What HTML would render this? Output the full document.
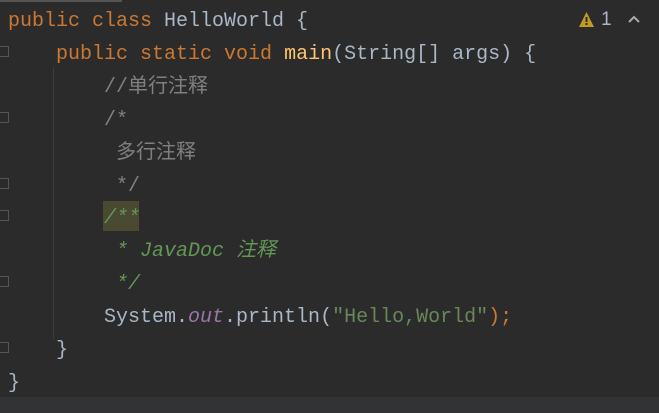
<!DOCTYPE html><html><head><style>
body{margin:0;width:659px;height:413px;background:#2b2b2b;overflow:hidden;position:relative;font-family:"Liberation Mono","Noto Sans CJK SC",monospace;font-size:20px}
.l{position:absolute;left:8px;white-space:pre;color:#a9b7c6;line-height:20px}
.k{color:#cc7832}.f{color:#ffc66d}.c{color:#808080}.d{color:#629755;font-style:italic}.o{color:#9876aa;font-style:italic}.s{color:#6a8759}
.g{position:absolute;left:0;width:9px;height:11px;border:1px solid #555;border-left:none;box-sizing:border-box}
</style></head><body>
<div style="position:absolute;left:0;top:0;width:122px;height:2px;background:#555"></div>
<div style="position:absolute;left:0;top:397px;width:659px;height:16px;background:#313335"></div>
<div style="position:absolute;left:53px;top:67px;width:1px;height:273px;background:#3b3b3b"></div>
<div style="position:absolute;left:103px;top:201px;width:36px;height:30px;background:#4a4a32"></div>
<div class="l" style="top:12px"><span class="k">public class </span>HelloWorld {</div>
<div class="l" style="top:45px">    <span class="k">public static void </span><span class="f">main</span>(String[] args) {</div>
<div class="l c" style="top:78px">        //单行注释</div>
<div class="l c" style="top:111px">        /*</div>
<div class="l c" style="top:144px">         多行注释</div>
<div class="l c" style="top:177px">         */</div>
<div class="l d" style="top:209px">        /**</div>
<div class="l d" style="top:242px">         * JavaDoc 注释</div>
<div class="l d" style="top:275px">         */</div>
<div class="l" style="top:308px">        System.<span class="o">out</span>.println(<span class="s">"Hello,World"</span><span class="k">);</span></div>
<div class="l" style="top:341px">    }</div>
<div class="l" style="top:374px">}</div>
<div class="g" style="top:46px"></div><div class="g" style="top:112px"></div><div class="g" style="top:178px"></div><div class="g" style="top:210px"></div><div class="g" style="top:276px"></div><div class="g" style="top:342px"></div>
<svg style="position:absolute;left:578px;top:11px" width="17" height="17"><path d="M8.5 1L16 16H1Z" fill="#c29b22"/><rect x="7.5" y="6" width="2" height="5" fill="#2b2b2b"/><rect x="7.5" y="12" width="2" height="2" fill="#2b2b2b"/></svg>
<div style="position:absolute;left:601px;top:9px;color:#a9b7c6;font-family:'Liberation Sans',sans-serif;font-size:19px">1</div>
<svg style="position:absolute;left:627px;top:14px" width="14" height="10"><path d="M2 8L7 3L12 8" stroke="#aaa" stroke-width="2" fill="none"/></svg>
</body></html>
